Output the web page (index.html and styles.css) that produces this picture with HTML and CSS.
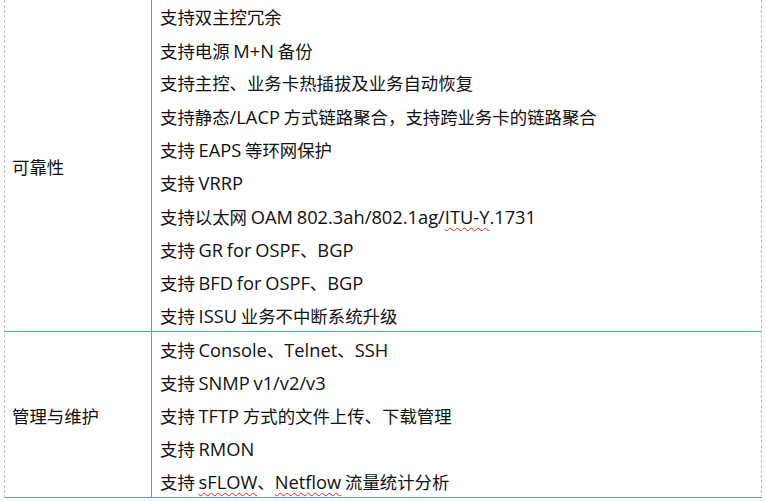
FILE: index.html
```html
<!DOCTYPE html>
<html lang="zh-CN">
<head>
<meta charset="utf-8">
<link rel="stylesheet" href="styles.css">
</head>
<body>
<div class="page">
  <div class="group">
    <div class="label">可靠性</div>
    <div class="items">
      <div class="item">支持双主控冗余</div>
      <div class="item">支持电源<span class="en"> M+N </span>备份</div>
      <div class="item">支持主控、业务卡热插拔及业务自动恢复</div>
      <div class="item">支持静态<span class="en">/LACP </span>方式链路聚合，支持跨业务卡的链路聚合</div>
      <div class="item">支持<span class="en"> EAPS </span>等环网保护</div>
      <div class="item">支持<span class="en"> VRRP</span></div>
      <div class="item">支持以太网<span class="en"> OAM 802.3ah/802.1ag/<span class="spell">ITU-Y</span>.1731</span></div>
      <div class="item">支持<span class="en"> GR for OSPF</span>、<span class="en">BGP</span></div>
      <div class="item">支持<span class="en"> BFD for OSPF</span>、<span class="en">BGP</span></div>
      <div class="item">支持<span class="en"> ISSU </span>业务不中断系统升级</div>
    </div>
  </div>
  <div class="group">
    <div class="label">管理与维护</div>
    <div class="items">
      <div class="item">支持<span class="en"> Console</span>、<span class="en">Telnet</span>、<span class="en">SSH</span></div>
      <div class="item">支持<span class="en"> SNMP v1/v2/v3</span></div>
      <div class="item">支持<span class="en"> TFTP </span>方式的文件上传、下载管理</div>
      <div class="item">支持<span class="en"> RMON</span></div>
      <div class="item">支持<span class="en"> <span class="spell">sFLOW</span></span>、<span class="en"><span class="spell">Netflow</span> </span>流量统计分析</div>
    </div>
  </div>
</div>
</body>
</html>
```
FILE: styles.css
```css
html, body {
  margin: 0;
  padding: 0;
  background: #ffffff;
}
body {
  font-family: "Open Sans", "Noto Sans CJK SC", sans-serif;
  font-size: 17.4px;
  color: #111111;
}
.page {
  margin-left: 4px;
  width: 756px;
  border-left: 1px dashed #bdbdbd;
  border-right: 1px dashed #bdbdbd;
}
.group {
  display: grid;
  grid-template-columns: 147px 1fr;
  border-bottom: 1px solid #5b9bd5;
}
.label {
  display: flex;
  align-items: center;
  padding-left: 7px;
  padding-top: 2px;
  border-right: 1px solid #5b9bd5;
}
.items {
  padding-left: 8px;
}
.item {
  height: 31.1px;
  padding-top: 2px;
  line-height: 31.1px;
  white-space: nowrap;
}
.en {
  font-size: 18.3px;
  word-spacing: -1px;
}
.spell {
  text-decoration: underline wavy #e02020;
  text-decoration-thickness: 1px;
  text-underline-offset: 3px;
}
```
